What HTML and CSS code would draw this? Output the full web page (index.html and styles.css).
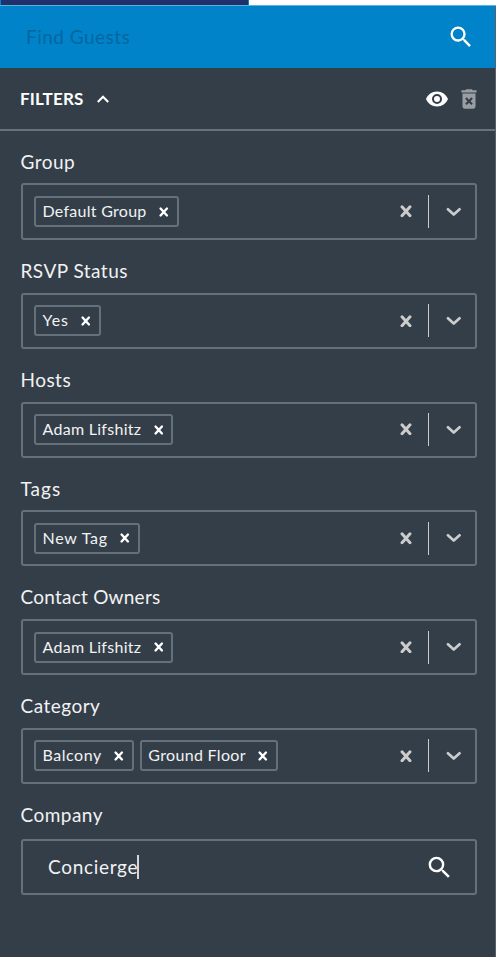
FILE: index.html
```html
<!DOCTYPE html>
<html lang="en">
<head>
<meta charset="utf-8">
<title>Guest filters</title>
<link rel="stylesheet" href="styles.css">
</head>
<body>
<svg class="defs" aria-hidden="true">
  <symbol id="search" viewBox="0 0 24 24"><path d="M15.5 14h-.79l-.28-.27A6.47 6.47 0 0 0 16 9.5 6.5 6.5 0 1 0 9.5 16c1.61 0 3.09-.59 4.23-1.57l.27.28v.79l5 4.99L20.49 19l-4.99-5zm-6 0a4.5 4.5 0 1 1 0-9 4.5 4.5 0 0 1 0 9z"/></symbol>
  <symbol id="eye" viewBox="0 0 24 24"><path d="M12 4.5C7 4.5 2.73 7.61 1 12c1.73 4.39 6 7.5 11 7.5s9.27-3.11 11-7.5c-1.73-4.39-6-7.5-11-7.5zM12 17a5 5 0 1 1 0-10 5 5 0 0 1 0 10zm0-8a3 3 0 1 0 0 6 3 3 0 0 0 0-6z"/></symbol>
  <symbol id="trash" viewBox="0 0 24 24"><path d="M6 19c0 1.1.9 2 2 2h8c1.1 0 2-.9 2-2V7H6v12zm2.46-7.12 1.41-1.41L12 12.59l2.12-2.12 1.41 1.41L13.41 14l2.12 2.12-1.41 1.41L12 15.41l-2.12 2.12-1.41-1.41L10.59 14l-2.13-2.12zM15.5 4l-1-1h-5l-1 1H5v2h14V4z"/></symbol>
  <symbol id="up" viewBox="0 0 14 10"><path d="M1.8 8 7 2.7 12.2 8" fill="none" stroke="currentColor" stroke-width="2.1"/></symbol>
  <symbol id="down" viewBox="0 0 16 10"><path d="M2 2.2 8 7.6 14 2.2" fill="none" stroke="currentColor" stroke-width="2.8" stroke-linecap="round" stroke-linejoin="round"/></symbol>
  <symbol id="x" viewBox="0 0 12 12"><path d="M2 1.6 10 10.4M10 1.6 2 10.4" fill="none" stroke="currentColor" stroke-width="3" stroke-linecap="round"/></symbol>
</svg>
<div class="tabs"><div class="tab"></div></div>
<div class="panel">
  <header class="search"><span class="placeholder">Find Guests</span><svg class="i-search"><use href="#search"/></svg></header>
  <div class="bar"><span class="title">FILTERS</span><svg class="i-up"><use href="#up"/></svg><svg class="i-eye"><use href="#eye"/></svg><svg class="i-trash"><use href="#trash"/></svg></div>
  <main class="fields">
    <section class="field first"><h2 class="label">Group</h2>
      <div class="box"><div class="chip"><span class="t29">Default Group</span><svg><use href="#x"/></svg></div><div class="controls"><svg class="clear"><use href="#x"/></svg><i class="sep"></i><svg class="down"><use href="#down"/></svg></div></div></section>
    <section class="field"><h2 class="label">RSVP Status</h2>
      <div class="box"><div class="chip"><span class="t90">Yes</span><svg><use href="#x"/></svg></div><div class="controls"><svg class="clear"><use href="#x"/></svg><i class="sep"></i><svg class="down"><use href="#down"/></svg></div></div></section>
    <section class="field"><h2 class="label">Hosts</h2>
      <div class="box"><div class="chip"><span class="t29">Adam Lifshitz</span><svg><use href="#x"/></svg></div><div class="controls"><svg class="clear"><use href="#x"/></svg><i class="sep"></i><svg class="down"><use href="#down"/></svg></div></div></section>
    <section class="field"><h2 class="label t100">Tags</h2>
      <div class="box"><div class="chip"><span class="t74">New Tag</span><svg><use href="#x"/></svg></div><div class="controls"><svg class="clear"><use href="#x"/></svg><i class="sep"></i><svg class="down"><use href="#down"/></svg></div></div></section>
    <section class="field"><h2 class="label t24">Contact Owners</h2>
      <div class="box"><div class="chip"><span class="t29">Adam Lifshitz</span><svg><use href="#x"/></svg></div><div class="controls"><svg class="clear"><use href="#x"/></svg><i class="sep"></i><svg class="down"><use href="#down"/></svg></div></div></section>
    <section class="field"><h2 class="label">Category</h2>
      <div class="box"><div class="chip"><span class="t54">Balcony</span><svg><use href="#x"/></svg></div><div class="chip"><span class="t33">Ground Floor</span><svg><use href="#x"/></svg></div><div class="controls"><svg class="clear"><use href="#x"/></svg><i class="sep"></i><svg class="down"><use href="#down"/></svg></div></div></section>
    <section class="field last"><h2 class="label">Company</h2>
      <div class="box"><span class="value">Concierge</span><i class="cursor"></i><svg class="i-find"><use href="#search"/></svg></div></section>
  </main>
</div>
</body>
</html>
```
FILE: styles.css
```css
* { box-sizing: border-box; }
body { margin: 0; height: 957px; overflow: hidden; background: #343e48; color: #f1f2f3; font-family: Lato, "Open Sans", sans-serif; }
svg { display: block; flex: none; fill: currentColor; }
.defs { position: absolute; width: 0; height: 0; }
.tabs { height: 6px; background: #fff; border-bottom: 1px solid #5fb1dd; }
.tab { width: 249px; height: 5px; background: #1f306c; border: solid #0083c9; border-width: 0 1px; }
.panel { height: 951px; border-right: 1px solid #56616b; }
.search { display: flex; align-items: center; justify-content: space-between; height: 62px; padding: 0 20px 1px 26px; background: #0083c9; }
.placeholder { font-size: 19px; letter-spacing: .47px; color: #0566a1; }
.i-search { width: 28px; height: 28px; color: #fff; }
.bar { display: flex; align-items: center; height: 63px; padding: 0 13px 0 20px; border-bottom: 2px solid #67727b; color: #fff; }
.title { font-size: 17px; font-weight: 700; letter-spacing: .2px; }
.i-up { width: 14px; height: 10px; margin-left: 12px; }
.i-eye { width: 24px; height: 24px; margin-left: auto; }
.i-trash { width: 26px; height: 26px; margin-left: 7px; color: #9a9ea3; }
.fields { padding: 0 18px 0 20.5px; }
.field { display: flex; flex-direction: column; height: 108.8px; }
.label { flex: 1; margin: 0; padding: 19px 0 0; font-size: 19px; line-height: 24px; font-weight: 400; letter-spacing: .47px; }
.box { display: flex; align-items: center; gap: 6px; height: 56px; padding: 0 14px 0 11.5px; border: 2px solid #65717a; border-radius: 3px; }
.first { height: 109px; }
.first .box { height: 57px; }
.last { height: 111.5px; }
.chip { display: flex; align-items: center; height: 31px; padding: 0 8px 0 6.5px; border: 2px solid #65717a; border-radius: 3px; font-size: 16px; }
.chip span { height: 27px; line-height: 25px; }
.chip svg { width: 9.5px; height: 10px; margin-left: 12.5px; color: #fff; }
.controls { display: flex; align-items: center; margin-left: auto; color: #ccc; }
.clear { width: 12px; height: 12.5px; }
.sep { width: 1.5px; height: 33px; margin: 0 16.5px 0 16px; background: #ccc; }
.down { width: 15.5px; height: 10px; }
.t24 { letter-spacing: .24px; }
.t29 { letter-spacing: .28px; }
.t33 { letter-spacing: .33px; }
.t54 { letter-spacing: .54px; }
.t74 { letter-spacing: .74px; }
.t90 { letter-spacing: .9px; }
.t100 { letter-spacing: 1px; }
.value { padding: 0 0 2px 14px; font-size: 19px; letter-spacing: .69px; }
.cursor { width: 2px; height: 24px; margin-left: -7px; background: #d5d8da; }
.i-find { width: 29px; height: 29px; margin-left: auto; margin-right: 7px; color: #fff; }
```
